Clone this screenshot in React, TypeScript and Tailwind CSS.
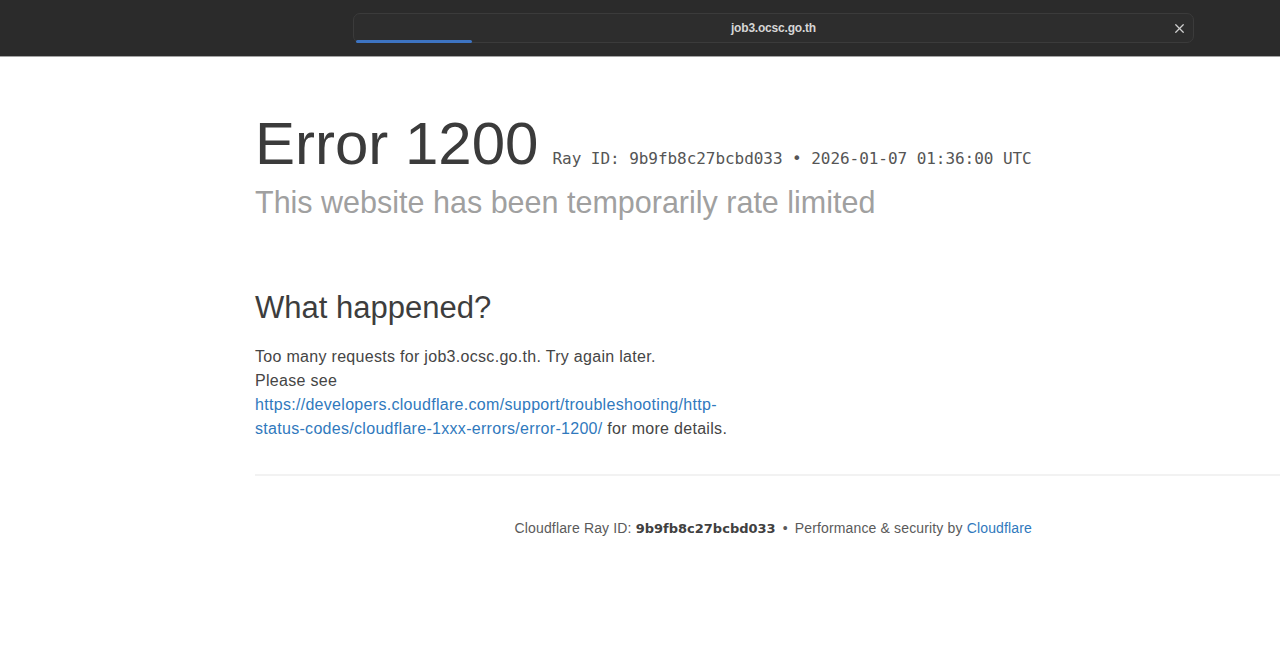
import { X } from 'lucide-react'

// ─── Page constants ────────────────────────────────────────────────────────
const HOST = 'job3.ocsc.go.th'
const RAY_ID = '9b9fb8c27bcbd033'
const TIMESTAMP = '2026-01-07 01:36:00 UTC'

export default function App() {
  return (
    <div className="min-h-screen w-full bg-white font-['Liberation_Sans',Arial,sans-serif]">
      {/* Browser chrome */}
      <header className="h-[57px] bg-[#2b2b2b] border-b border-[#a3a3a3] pt-[13px]">
        <div className="relative ml-[353px] w-[841px] h-[30px] rounded-[7px] border border-[#3b3b3b] bg-[#2d2d2d] flex items-center justify-center">
          <span className="text-[12px] font-bold text-[#d6d6d6] tracking-[-0.2px]">{HOST}</span>
          <X className="absolute right-[6px] top-[7px] w-[15px] h-[15px] text-[#cfcfcf]" strokeWidth={2} />
          <div className="absolute left-[2px] bottom-[-1px] w-[116px] h-[3px] rounded-full bg-[#3d74c2]" />
        </div>
      </header>

      {/* Content */}
      <main className="pl-[255px]">
        <div className="w-[777px]">
          <h1 className="mt-[57px] flex items-baseline whitespace-nowrap text-[60px] leading-[60px] text-[#3b3b3b]">
            <span>Error 1200</span>
            <small className="ml-[14px] text-[16px] tracking-[-0.05px] leading-none text-[#555] font-['DejaVu_Sans_Mono',monospace]">
              Ray ID: {RAY_ID} • {TIMESTAMP}
            </small>
          </h1>
          <h2 className="mt-[10px] whitespace-nowrap text-[30.5px] leading-[36px] text-[#a0a0a0]">
            This website has been temporarily rate limited
          </h2>

          <h2 className="mt-[70px] text-[31px] leading-[36px] text-[#3d3d3d]">What happened?</h2>
          <p className="mt-[19px] whitespace-nowrap text-[16px] tracking-[0.3px] leading-[24px] text-[#454545]">
            Too many requests for {HOST}. Try again later.
            <br />
            Please see
            <br />
            <a href="#" className="text-[#3079bd]">
              https://developers.cloudflare.com/support/troubleshooting/http-
              <br />
              status-codes/cloudflare-1xxx-errors/error-1200/
            </a>{' '}
            for more details.
          </p>
        </div>

        <div className="mt-[33px] h-[2px] bg-[#f2f2f2]" />

        <div className="w-[777px]">
          <p className="mt-[42px] whitespace-nowrap text-right text-[14px] tracking-[0.15px] leading-[20px] text-[#5a5a5a]">
            Cloudflare Ray ID:{' '}
            <strong className="font-bold text-[13px] tracking-normal text-[#404040] font-['DejaVu_Sans',sans-serif]">{RAY_ID}</strong>
            <span className="mx-[7px]">•</span>
            Performance &amp; security by <span className="text-[#3079bd]">Cloudflare</span>
          </p>
        </div>
      </main>
    </div>
  )
}
